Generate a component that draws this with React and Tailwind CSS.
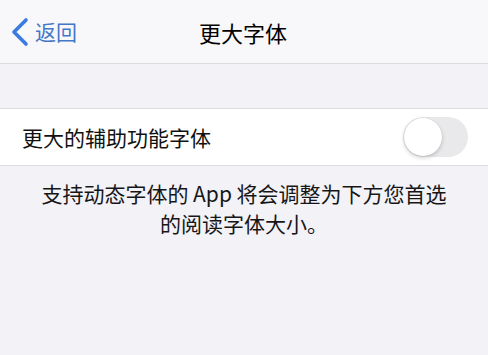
export default function App() {
  return (
    <div
      className="w-[488px] h-[355px] bg-[#f2f2f7] flex flex-col overflow-hidden"
      style={{ fontFamily: '"Noto Sans CJK SC", "Noto Sans", sans-serif' }}
    >
      <div className="h-[64px] bg-[#f8f8fa] border-b border-[#dcdce0] flex items-center relative shrink-0">
        <div className="flex items-center pl-[10px] gap-[5px] text-[#4577c9]">
          <svg width="20" height="30" viewBox="0 0 20 30" className="mt-[1px]">
            <path d="M16 3 L4 15 L16 27" fill="none" stroke="#3b7be0" strokeWidth="3.6" strokeLinecap="round" strokeLinejoin="round" />
          </svg>
          <span className="text-[21px] leading-none">返回</span>
        </div>
        <div className="absolute left-0 right-0 top-0 bottom-0 flex items-center justify-center pointer-events-none">
          <span className="text-[22px] leading-none text-black ml-[-2px] mt-[1px]">更大字体</span>
        </div>
      </div>
      <div className="h-[44px] shrink-0"></div>
      <div className="h-[58px] bg-white border-t border-b border-[#dcdce0] flex items-center justify-between pl-[22px] pr-[20px] shrink-0">
        <span className="text-[21px] leading-none text-[#111] mt-[1px]">更大的辅助功能字体</span>
        <div className="w-[65px] h-[40px] rounded-full bg-[#e9e9eb] p-[1px] flex items-center">
          <div className="w-[38px] h-[38px] rounded-full bg-white shadow-[0_2px_4px_rgba(0,0,0,0.18),0_0_0_0.5px_rgba(0,0,0,0.06)]"></div>
        </div>
      </div>
      <div className="pt-[12px] px-[20px] text-center text-[21px] leading-[30px] text-[#161618]">
        <div>支持动态字体的 App 将会调整为下方您首选</div>
        <div>的阅读字体大小。</div>
      </div>
    </div>
  );
}
